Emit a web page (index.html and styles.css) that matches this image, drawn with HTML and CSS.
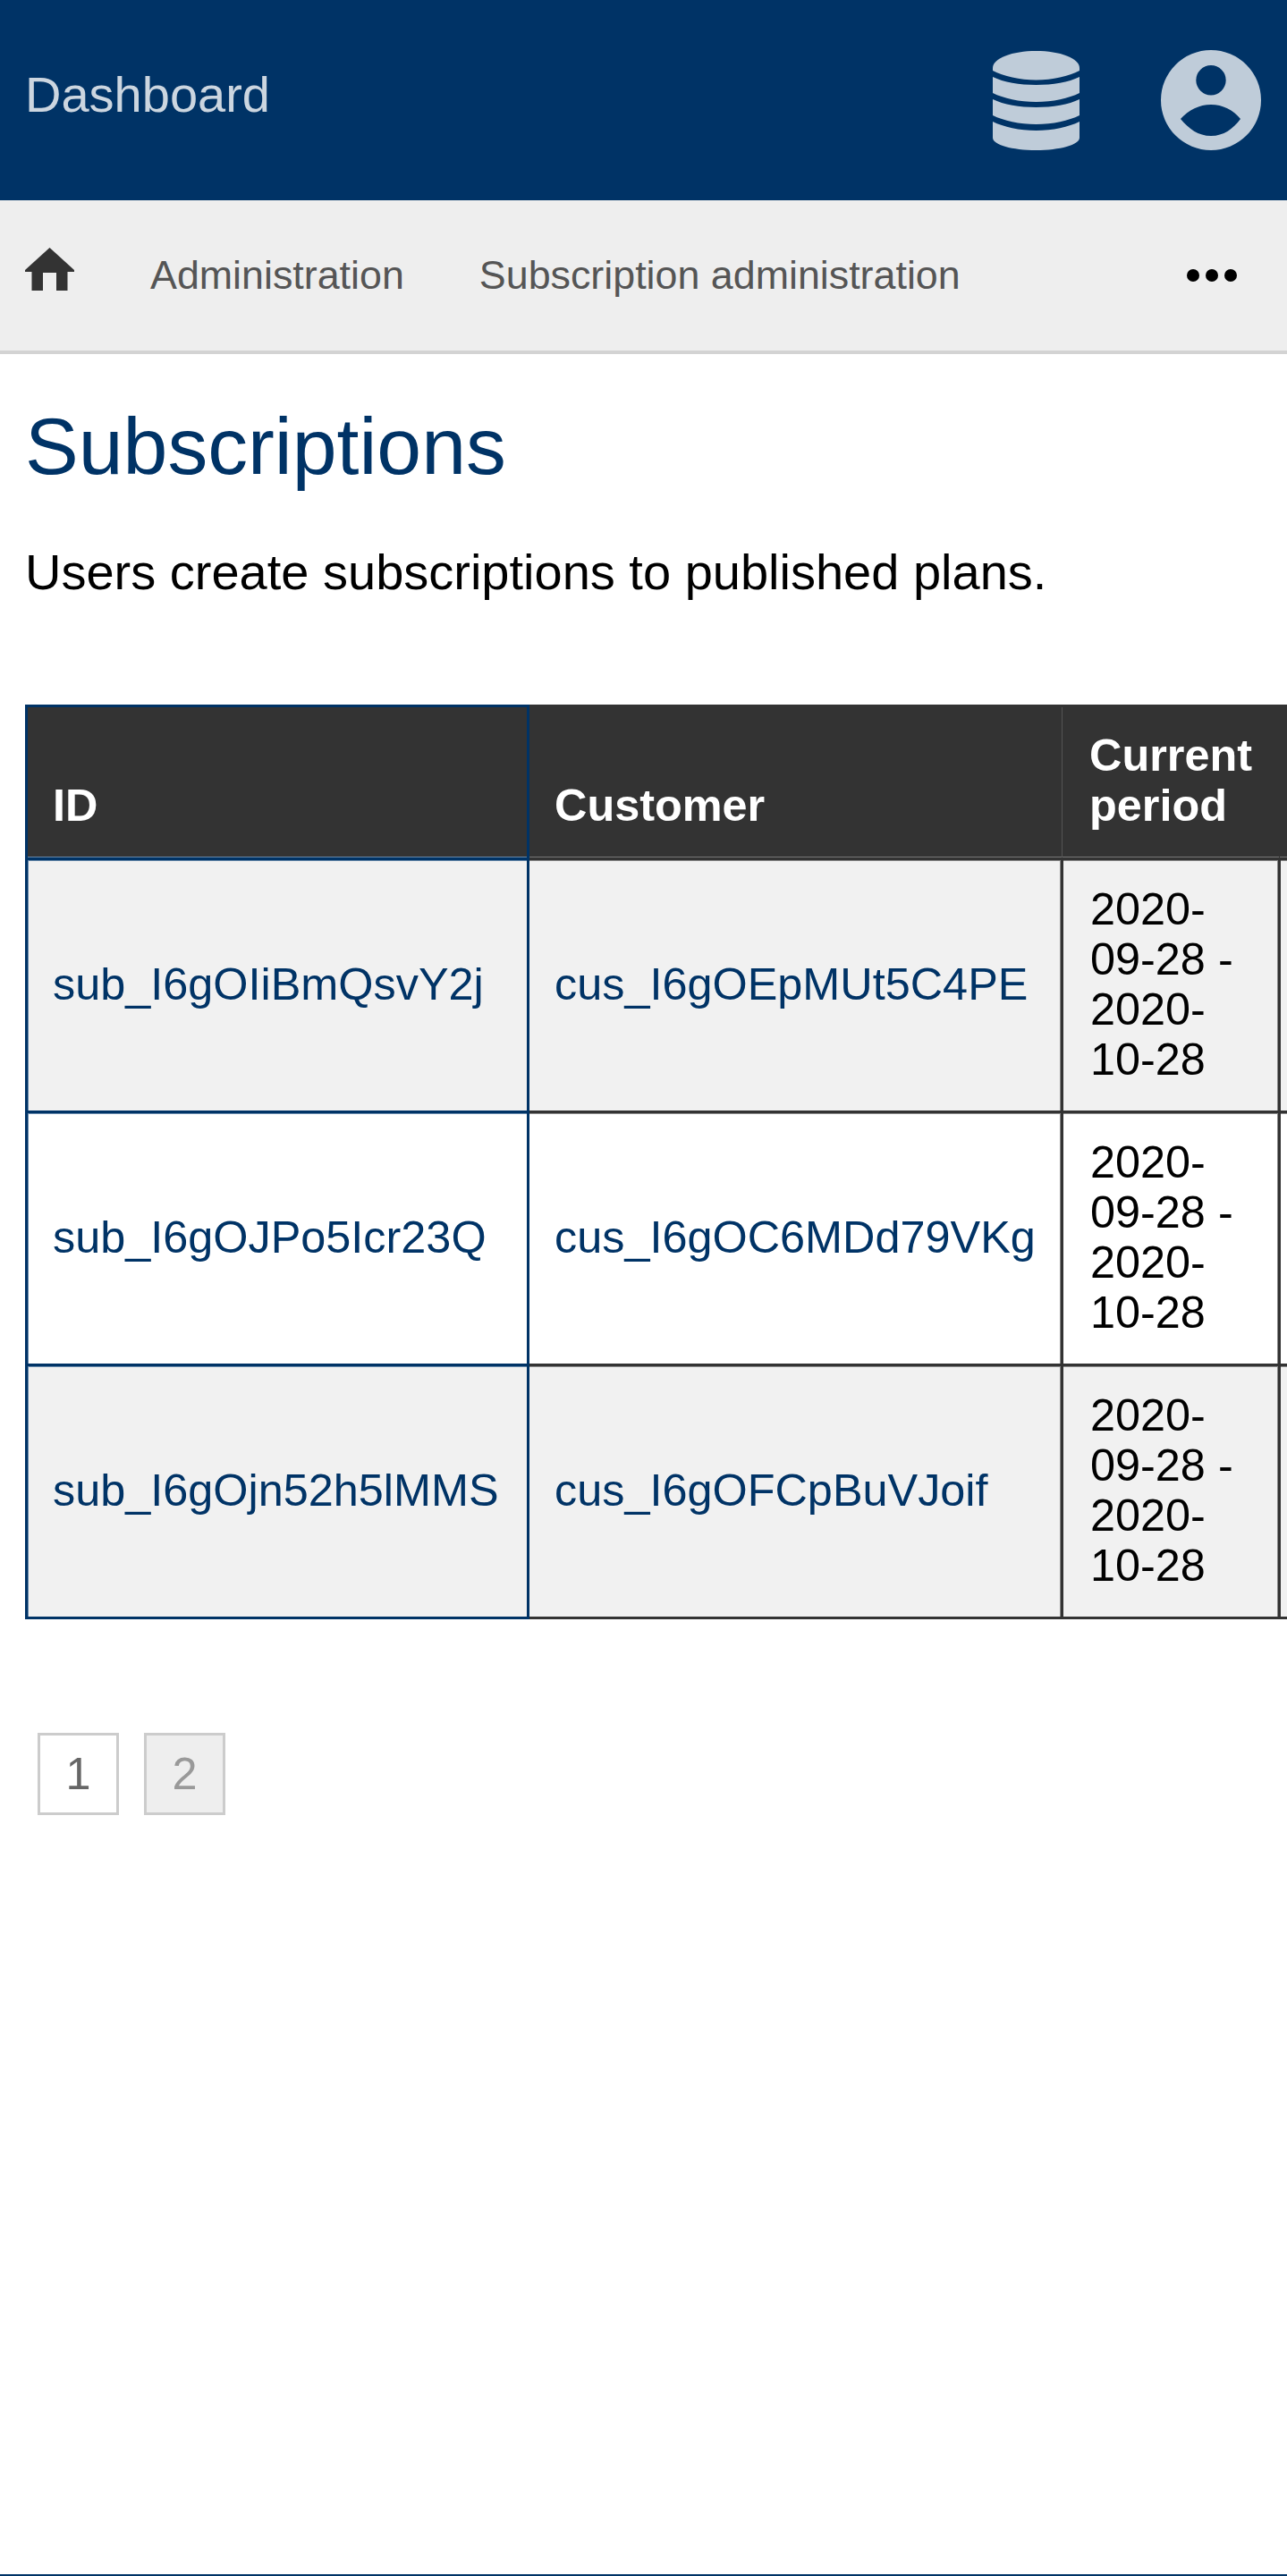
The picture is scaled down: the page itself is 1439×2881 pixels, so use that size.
FILE: index.html
```html
<!DOCTYPE html>
<html lang="en">

<head>
  <meta charset="UTF-8">
  <meta name="viewport" content="width=device-width, initial-scale=1.0">
  <title>Subscriptions</title>
  <link rel="stylesheet" href="styles.css">
</head>

<body>
  <header class="topbar">
    <a class="brand" href="#">Dashboard</a>
    <div class="topbar-icons">
      <svg class="icon-db" viewBox="0 0 97 111" aria-hidden="true">
        <path d="M0 19C0 8 22 0 48.500 0S97 8 97 19V22C85 28 67 32.500 48.500 32.500S12 28 0 22Z" />
        <path d="M0 29C12 35 30 38 48.500 38S85 35 97 29V47C85 53 67 57 48.500 57S12 53 0 47Z" />
        <path d="M0 54C12 60 30 63 48.500 63S85 60 97 54V72C85 78 67 82 48.500 82S12 78 0 72Z" />
        <path d="M0 79C12 85 30 89 48.500 89S85 85 97 79V97C97 105 75 111 48.500 111S0 105 0 97Z" />
      </svg>
      <svg class="icon-user" viewBox="0 0 112 112" aria-hidden="true">
        <path fill-rule="evenodd" d="M56 0A56 56 0 1 1 56 112A56 56 0 1 1 56 0ZM56 17A16.700 16.700 0 1 0 56 50.400A16.700 16.700 0 1 0 56 17ZM22 77C31 88 42 96 56 96S81 88 89 77C81 67 69 61 56 61S31 67 22 77Z" />
      </svg>
    </div>
  </header>

  <nav class="crumbs">
    <a class="home" href="#">
      <svg class="icon-home" viewBox="0 0 55 48" aria-hidden="true">
        <path d="M27.500 0L55 25V27H47.500V48H35V28H20V48H7.500V27H0V25Z" />
      </svg>
    </a>
    <a href="#">Administration</a>
    <a href="#">Subscription administration</a>
    <svg class="icon-more" viewBox="0 0 56 14" aria-hidden="true">
      <circle cx="7" cy="7" r="7" />
      <circle cx="28" cy="7" r="7" />
      <circle cx="49" cy="7" r="7" />
    </svg>
  </nav>

  <main class="content">
    <h1>Subscriptions</h1>
    <p class="intro">Users create subscriptions to published plans.</p>

    <div class="table-wrap">
      <table class="subs">
        <colgroup>
          <col class="col-id">
          <col class="col-customer">
          <col class="col-period">
          <col class="col-rest">
        </colgroup>
        <thead>
          <tr>
            <th>ID</th>
            <th>Customer</th>
            <th>Current period</th>
            <th></th>
          </tr>
        </thead>
        <tbody>
          <tr>
            <td><a href="#">sub_I6gOIiBmQsvY2j</a></td>
            <td><a href="#">cus_I6gOEpMUt5C4PE</a></td>
            <td>2020-09-28 - 2020-10-28</td>
            <td></td>
          </tr>
          <tr>
            <td><a href="#">sub_I6gOJPo5Icr23Q</a></td>
            <td><a href="#">cus_I6gOC6MDd79VKg</a></td>
            <td>2020-09-28 - 2020-10-28</td>
            <td></td>
          </tr>
          <tr>
            <td><a href="#">sub_I6gOjn52h5lMMS</a></td>
            <td><a href="#">cus_I6gOFCpBuVJoif</a></td>
            <td>2020-09-28 - 2020-10-28</td>
            <td></td>
          </tr>
        </tbody>
      </table>
    </div>

    <div class="pager">
      <a class="page" href="#">1</a>
      <span class="page page-current">2</span>
    </div>
  </main>

  <footer class="bottom"></footer>
</body>

</html>
```

FILE: styles.css
```css
body {
  font-family: "Liberation Sans", Arial, sans-serif;
  font-size: 50.400px;
  line-height: 56px;
  color: #000;
  background: white;
  margin: 0;
  min-height: 100vh;
  display: flex;
  flex-direction: column;
}

a {
  text-decoration: none;
}

.topbar {
  background-color: #036;
  height: 224px;
  display: flex;
  align-items: center;
  justify-content: space-between;
  padding: 0 29px 0 28px;
}

.brand {
  color: #ccd6e0;
  font-size: 56px;
  padding-bottom: 12px;
}

.topbar-icons {
  display: flex;
  align-items: center;
  gap: 91px;
}

.topbar-icons svg {
  display: block;
  fill: #bfccd9;
}

.icon-db {
  width: 97px;
  height: 111px;
}

.icon-user {
  width: 112px;
  height: 112px;
}

.crumbs {
  background-color: #eee;
  border-bottom: 4px solid #d3d3d3;
  height: 168px;
  display: flex;
  align-items: center;
  gap: 84px;
  padding: 0 56px 0 28px;
  font-size: 44.800px;
}

.crumbs a {
  color: #555;
  padding-bottom: 2px;
}

.crumbs .home {
  padding-bottom: 14px;
  margin-right: 1px;
}

.icon-home {
  display: block;
  width: 55px;
  height: 48px;
  fill: #333;
}

.icon-more {
  width: 56px;
  height: 14px;
  margin-left: auto;
  fill: #000;
}

.content {
  flex: 1;
  padding-left: 28px;
}

h1 {
  color: #036;
  font-size: 89.600px;
  line-height: 103px;
  font-weight: normal;
  margin: 52px 0 0;
}

.intro {
  font-size: 56px;
  line-height: 64px;
  margin: 57px 0 116px;
}

.table-wrap {
  overflow: hidden;
}

.subs {
  border-collapse: collapse;
  table-layout: fixed;
  width: 1500px;
}

.col-id {
  width: 561px;
}

.col-customer {
  width: 597px;
}

.col-period {
  width: 243px;
}

.subs th {
  background-color: #333;
  color: white;
  font-weight: bold;
  text-align: left;
  vertical-align: bottom;
  padding: 26px 28px 30px;
  border: 1px solid #555;
  border-top: 3px solid #333;
  box-shadow: inset 0 -1px 0 #777;
}

.subs th:first-child {
  border: 3px solid #036;
  box-shadow: inset 0 -1px 0 #6688aa;
}

.subs th:nth-child(3) {
  border-right-color: #333;
}

.subs td {
  padding: 27px 28px 29px;
  border: 3px solid #333;
  box-shadow: inset 0 1px 0 #888, inset -1px 0 0 #888;
}

.subs td:first-child {
  border-color: #036;
  box-shadow: inset 0 1px 0 #6688aa, inset 1px 0 0 #6688aa;
}

.subs th:nth-child(3),
.subs td:nth-child(3) {
  padding-left: 30px;
}

.subs td a {
  color: #036;
  white-space: nowrap;
}

.subs tbody tr:nth-child(odd) {
  background-color: #f1f1f1;
}

.pager {
  display: flex;
  gap: 28px;
  margin: 127px 0 0 14px;
}

.page {
  box-sizing: border-box;
  width: 91px;
  height: 92px;
  border: 3px solid #ccc;
  color: #666;
  display: flex;
  align-items: center;
  justify-content: center;
}

.page-current {
  background-color: #eee;
  color: #999;
}

.bottom {
  border-top: 2px solid #036;
}
```
